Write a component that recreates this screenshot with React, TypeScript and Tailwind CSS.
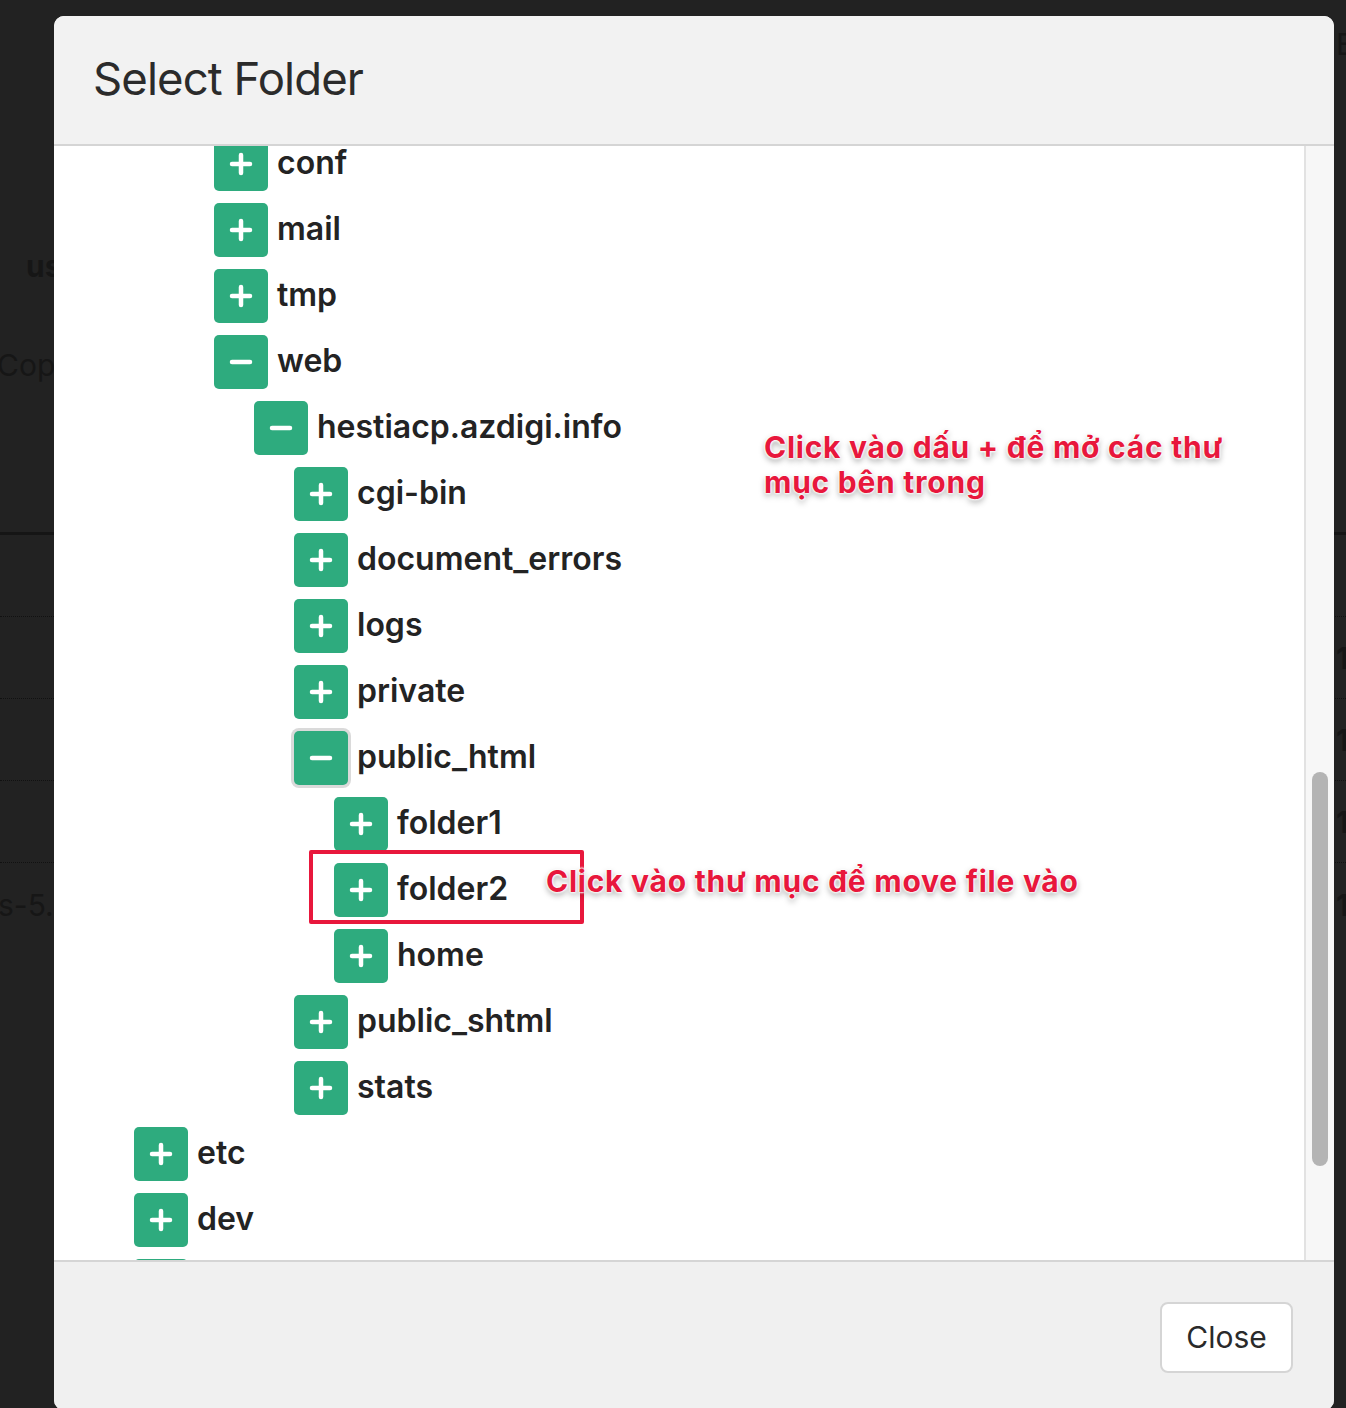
import React from "react";

type Node = { name: string; level: number; open?: boolean; focus?: boolean };

const rows: Node[] = [
  { name: "conf", level: 2 },
  { name: "mail", level: 2 },
  { name: "tmp", level: 2 },
  { name: "web", level: 2, open: true },
  { name: "hestiacp.azdigi.info", level: 3, open: true },
  { name: "cgi-bin", level: 4 },
  { name: "document_errors", level: 4 },
  { name: "logs", level: 4 },
  { name: "private", level: 4 },
  { name: "public_html", level: 4, open: true, focus: true },
  { name: "folder1", level: 5 },
  { name: "folder2", level: 5 },
  { name: "home", level: 5 },
  { name: "public_shtml", level: 4 },
  { name: "stats", level: 4 },
  { name: "etc", level: 0 },
  { name: "dev", level: 0 },
  { name: "home", level: 0 },
];

const indent = ["ml-0", "ml-[40px]", "ml-[80px]", "ml-[120px]", "ml-[160px]", "ml-[200px]"];

function ToggleIcon({ open }: { open?: boolean }) {
  return (
    <svg width="54" height="54" viewBox="0 0 54 54" fill="none">
      <line x1="18" y1="27" x2="36" y2="27" stroke="#fff" strokeWidth="4.5" strokeLinecap="round" />
      {!open && <line x1="27" y1="18" x2="27" y2="36" stroke="#fff" strokeWidth="4.5" strokeLinecap="round" />}
    </svg>
  );
}

function Row({ node }: { node: Node }) {
  return (
    <div className={`flex items-center gap-[9px] h-[54px] ${indent[node.level]}`}>
      <div
        className={`w-[54px] h-[54px] shrink-0 rounded-[5px] bg-[#2eab7e] flex items-center justify-center ${
          node.focus ? "shadow-[0_0_0_3px_#dadada]" : ""
        }`}
      >
        <ToggleIcon open={node.open} />
      </div>
      <span className="pb-[3px] text-[32px] font-semibold leading-none text-[#232323] whitespace-nowrap">
        {node.name}
      </span>
    </div>
  );
}

const annot =
  "font-bold text-[30px] leading-[35px] tracking-[0.025em] text-[#e8173c] [text-shadow:0_0_2px_#fff,0_0_2px_#fff,0_0_3px_#fff,0_0_3px_#fff,0_3px_6px_rgba(0,0,0,0.4)]";

function BgRow({ right, children }: { right?: string; children?: React.ReactNode }) {
  return (
    <div className="h-[82px] border-b border-dotted border-[#111] flex items-center justify-between">
      <span className="-ml-[2px]">{children}</span>
      <span className="w-[10px] overflow-hidden whitespace-nowrap font-bold">{right}</span>
    </div>
  );
}

export default function App() {
  return (
    <div className="relative h-[1408px] overflow-hidden bg-[#222222] font-['Inter','Noto_Sans',sans-serif]">
      {/* dimmed page behind the dialog */}
      <div className="flex flex-col text-[30px] leading-[40px] text-[#161616]">
        <div className="h-[246px] pt-[24px] flex justify-end">
          <span className="w-[10px] overflow-hidden">E</span>
        </div>
        <div className="h-[99px] pl-[26px] font-bold">us</div>
        <div className="h-[187px] -ml-[3px]">Copy</div>
        <div className="h-[3px] bg-[#151515]" />
        <BgRow />
        <BgRow right="1/" />
        <BgRow right="1/" />
        <BgRow right="1/" />
        <div className="pt-[22px] -ml-[2px] flex justify-between">
          <span>s-5.</span>
          <span className="w-[10px] overflow-hidden font-bold">1/</span>
        </div>
      </div>

      {/* dialog */}
      <div className="absolute left-[54px] top-[16px] w-[1280px] h-[1394px] rounded-[10px] bg-white flex flex-col overflow-hidden">
        <div className="h-[130px] shrink-0 bg-[#f2f2f2] border-b-2 border-[#d5d5d5] flex items-center px-[39px]">
          <h2 className="pb-[2px] text-[45.5px] font-normal tracking-[-0.02em] text-[#2b2b2b] leading-none">
            Select Folder
          </h2>
        </div>

        <div className="h-[1114px] shrink-0 flex bg-white">
          <div className="flex-1 overflow-hidden pl-[80px]">
            <div className="mt-[-9px] flex flex-col gap-[12px]">
              {rows.map((r, i) => (
                <Row key={i} node={r} />
              ))}
            </div>
          </div>
          <div className="w-[30px] shrink-0 border-l-2 border-[#e2e2e2] bg-[#f7f7f7] pl-[6px] pt-[626px]">
            <div className="w-[16px] h-[394px] rounded-full bg-[#b4b4b4]" />
          </div>
        </div>

        <div className="flex-1 bg-[#f0f0f0] border-t-2 border-[#d5d5d5] flex justify-end items-start pt-[40px] pr-[41px]">
          <button className="w-[133px] h-[71px] rounded-[8px] border-2 border-[#d5d5d5] bg-white text-[30px] text-[#2a2a2a]">
            Close
          </button>
        </div>

        {/* annotations drawn over the dialog */}
        <div className={`absolute left-[710px] top-[414px] ${annot}`}>
          Click vào dấu + để mở các thư
          <br />
          mục bên trong
        </div>
        <div className="absolute left-[255px] top-[834px] w-[275px] h-[74px] border-[4px] border-[#e8173c] rounded-[2px]" />
        <div className={`absolute left-[492px] top-[848px] whitespace-nowrap ${annot}`}>
          Click vào thư mục để move file vào
        </div>
      </div>
    </div>
  );
}
